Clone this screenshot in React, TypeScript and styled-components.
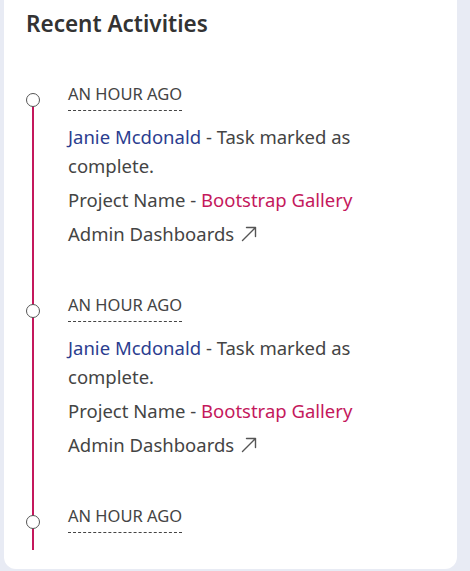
import React from "react";
import styled, { createGlobalStyle } from "styled-components";

const Global = createGlobalStyle`
  html, body { margin: 0; padding: 0; background: #e8ebf4; }
  body { font-family: "Noto Sans", "Open Sans", sans-serif; color: #444; }
  * { box-sizing: border-box; }
`;

const Page = styled.div`
  height: 571px;
  overflow: hidden;
  padding: 0 13px 2px 4px;
  display: flex;
  flex-direction: column;
`;

const Card = styled.section`
  flex: 1;
  background: #fff;
  border-radius: 0 0 12px 12px;
  padding: 9px 30px 0 22px;
  overflow: hidden;
`;

const Title = styled.h2`
  margin: 0;
  font-size: 22.5px;
  line-height: 30px;
  font-weight: 600;
  color: #333;
`;

const Timeline = styled.ul`
  display: flow-root;
  list-style: none;
  margin: 60px 0 0 6px;
  padding: 0;
  border-left: 2px solid #c4185c;
`;

const Item = styled.li`
  position: relative;
  padding: 0 0 41px 34px;
  &:first-child {
    margin-top: -16px;
  }
  &:last-child {
    padding-bottom: 6px;
  }
`;

const Dot = styled.span`
  position: absolute;
  left: -8px;
  top: 10px;
  width: 14px;
  height: 14px;
  border-radius: 50%;
  background: #fff;
  border: 1px solid #555;
`;

const Time = styled.div`
  width: fit-content;
  font-size: 16.5px;
  line-height: 22px;
  padding-bottom: 5px;
  border-bottom: 1px dashed #444;
  color: #444;
  text-transform: uppercase;
  margin-bottom: 11px;
`;

const Para = styled.p`
  margin: 0 0 5px;
  font-size: 18.5px;
  line-height: 29px;
  color: #444;
`;

const Link = styled.span<{ $tone: "blue" | "pink" }>`
  color: ${(p) => (p.$tone === "blue" ? "#2b3d8f" : "#c4185c")};
`;

const ArrowIcon = styled.svg`
  width: 16px;
  height: 16px;
  margin-left: 7px;
  vertical-align: -1px;
`;

const UpRight = () => (
  <ArrowIcon viewBox="0 0 16 16" fill="none" stroke="#555" strokeWidth="1.4" strokeLinecap="round" strokeLinejoin="round">
    <path d="M1.5 14.5 L14.5 1.5 M5.5 1.5 H14.5 V10.5" />
  </ArrowIcon>
);

const items = [0, 1];

export default function App() {
  return (
    <>
      <Global />
      <Page>
        <Card>
          <Title>Recent Activities</Title>
          <Timeline>
            {items.map((i) => (
              <Item key={i}>
                <Dot />
                <Time>An hour ago</Time>
                <Para>
                  <Link $tone="blue">Janie Mcdonald</Link> - Task marked as complete.
                </Para>
                <Para>
                  Project Name - <Link $tone="pink">Bootstrap Gallery</Link>
                </Para>
                <Para>
                  Admin Dashboards
                  <UpRight />
                </Para>
              </Item>
            ))}
            <Item>
              <Dot />
              <Time>An hour ago</Time>
            </Item>
          </Timeline>
        </Card>
      </Page>
    </>
  );
}
